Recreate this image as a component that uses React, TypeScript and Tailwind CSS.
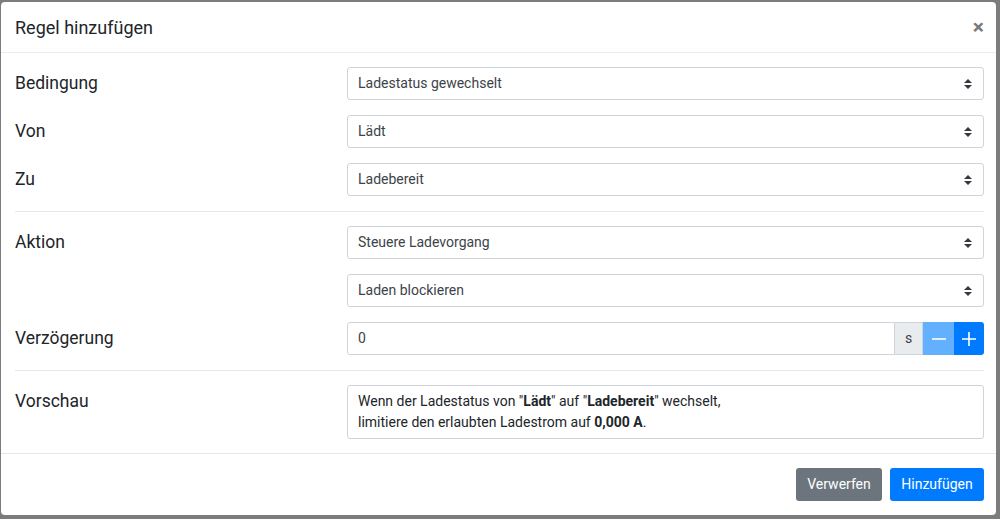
import React from "react";

const Arrows = () => (
  <svg width="8" height="10" viewBox="0 0 4 5" className="shrink-0">
    <path d="M2 0L0 2h4zm0 5L0 3h4z" fill="#343a40" />
  </svg>
);

const Select = ({ value }: { value: string }) => (
  <div className="flex h-[33px] w-full items-center justify-between rounded-[3px] border border-[#ced4da] bg-white pl-[10px] pr-[11px] text-[14px] text-[#3d4349]">
    <span>{value}</span>
    <Arrows />
  </div>
);

const Label = ({ children }: { children: React.ReactNode }) => (
  <div className="flex h-[33px] w-[332px] shrink-0 items-center text-[17.5px] text-[#212529]">{children}</div>
);

export default function App() {
  return (
    <div
      className="h-[519px] w-[1000px] overflow-hidden bg-[#7c7c7c] pl-[1px] pt-[2px]"
      style={{ fontFamily: "Roboto, 'Noto Sans', sans-serif" }}
    >
      <div className="flex h-[513px] w-[995px] flex-col rounded-[4px] bg-white">
        {/* Header */}
        <div className="flex h-[51px] items-center justify-between border-b border-[#e9ecef] pl-[14px] pr-[12px]">
          <div className="text-[18px] text-[#212529]">Regel hinzufügen</div>
          <div className="text-[21px] font-bold leading-none text-[#7a7a7a]">×</div>
        </div>
        {/* Body */}
        <div className="flex flex-col pl-[14px] pr-[12px] pt-[14px]">
          <div className="flex flex-col gap-[15px]">
            <div className="flex">
              <Label>Bedingung</Label>
              <Select value="Ladestatus gewechselt" />
            </div>
            <div className="flex">
              <Label>Von</Label>
              <Select value="Lädt" />
            </div>
            <div className="flex">
              <Label>Zu</Label>
              <Select value="Ladebereit" />
            </div>
          </div>
          <div className="mb-[14px] mt-[15px] border-t border-[#e5e7ea]" />
          <div className="flex flex-col gap-[15px]">
            <div className="flex">
              <Label>Aktion</Label>
              <Select value="Steuere Ladevorgang" />
            </div>
            <div className="flex">
              <Label>{""}</Label>
              <Select value="Laden blockieren" />
            </div>
            <div className="flex">
              <Label>Verzögerung</Label>
              <div className="flex h-[33px] w-full text-[14px]">
                <div className="flex flex-1 items-center rounded-l-[3px] border border-[#ced4da] pl-[10px] text-[#3d4349]">0</div>
                <div className="flex w-[28px] items-center justify-center border-y border-r border-[#ced4da] bg-[#e9ecef] text-[#3d4349]">s</div>
                <div className="flex w-[31px] items-center justify-center bg-[#63b0fe]">
                  <svg width="16" height="16" viewBox="0 0 16 16"><path d="M1 8h14" stroke="white" strokeWidth="1.6" /></svg>
                </div>
                <div className="flex w-[30px] items-center justify-center rounded-r-[3px] bg-[#007bff]">
                  <svg width="16" height="16" viewBox="0 0 16 16"><path d="M1 8h14M8 1v14" stroke="white" strokeWidth="1.6" /></svg>
                </div>
              </div>
            </div>
          </div>
          <div className="mb-[14px] mt-[15px] border-t border-[#e5e7ea]" />
          <div className="flex">
            <div className="w-[332px] shrink-0 pt-[6px] text-[17.5px] leading-[21px] text-[#212529]">Vorschau</div>
            <div className="w-full rounded-[3px] border border-[#ced4da] px-[10px] py-[5px] text-[14px] leading-[21px] text-[#212529]">
              Wenn der Ladestatus von "<b>Lädt</b>" auf "<b>Ladebereit</b>" wechselt,
              <br />
              limitiere den erlaubten Ladestrom auf <b>0,000 A</b>.
            </div>
          </div>
        </div>
        {/* Footer */}
        <div className="mt-[14px] flex justify-end gap-[8px] border-t border-[#e5e7ea] pr-[12px] pt-[14px]">
          <div className="flex h-[33px] w-[86px] items-center justify-center rounded-[3px] bg-[#6c757d] text-[14px] text-white">Verwerfen</div>
          <div className="flex h-[33px] w-[94px] items-center justify-center rounded-[3px] bg-[#007bff] text-[14px] text-white">Hinzufügen</div>
        </div>
      </div>
    </div>
  );
}
